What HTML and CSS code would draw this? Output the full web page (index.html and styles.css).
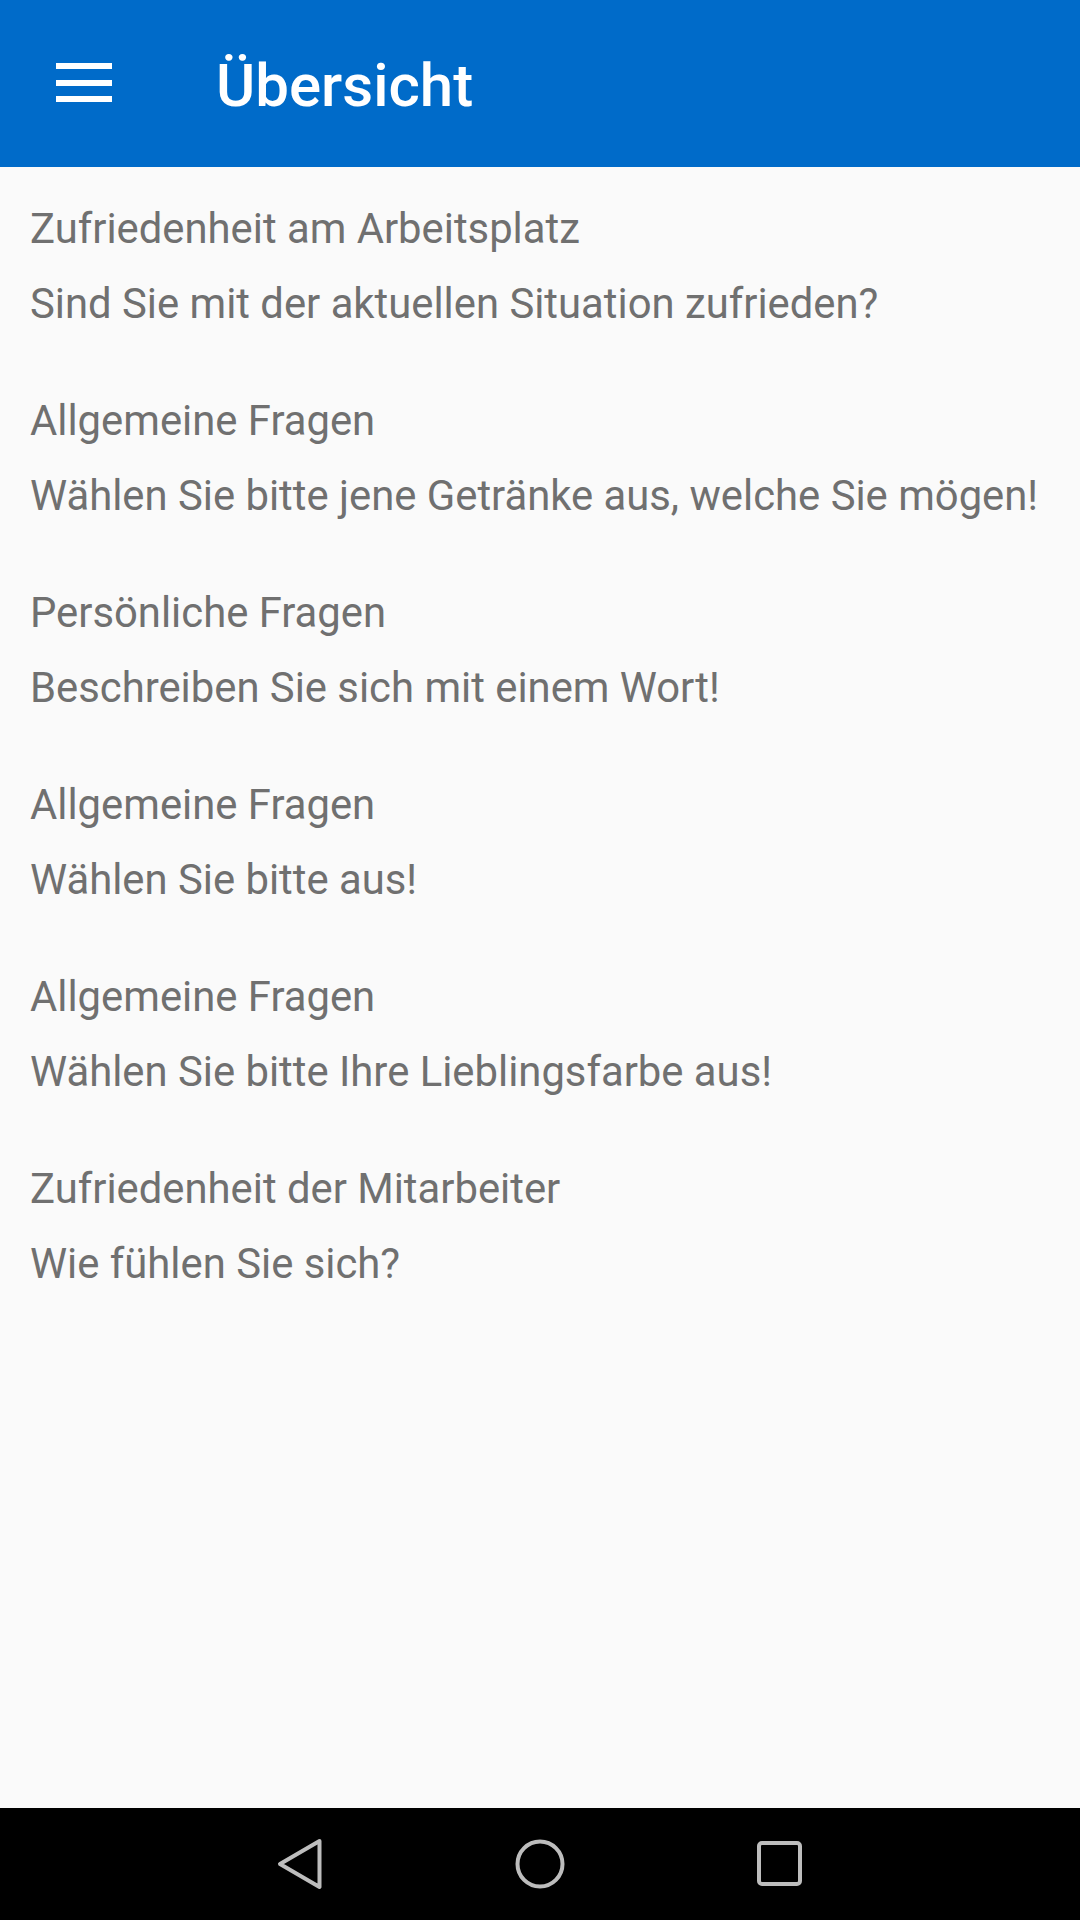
FILE: index.html
```html
<!DOCTYPE html>
<html lang="de">
<head>
<meta charset="utf-8">
<title>Übersicht</title>
<link rel="stylesheet" href="styles.css">
</head>
<body>
<div class="screen">
  <header class="appbar">
    <div class="menu" aria-label="Menü">
      <span></span><span></span><span></span>
    </div>
    <h1 class="title">Übersicht</h1>
  </header>
  <main class="list">
    <div class="item">
      <div class="cat">Zufriedenheit am Arbeitsplatz</div>
      <div class="q">Sind Sie mit der aktuellen Situation zufrieden?</div>
    </div>
    <div class="item">
      <div class="cat">Allgemeine Fragen</div>
      <div class="q">Wählen Sie bitte jene Getränke aus, welche Sie mögen!</div>
    </div>
    <div class="item">
      <div class="cat">Persönliche Fragen</div>
      <div class="q">Beschreiben Sie sich mit einem Wort!</div>
    </div>
    <div class="item">
      <div class="cat">Allgemeine Fragen</div>
      <div class="q">Wählen Sie bitte aus!</div>
    </div>
    <div class="item">
      <div class="cat">Allgemeine Fragen</div>
      <div class="q">Wählen Sie bitte Ihre Lieblingsfarbe aus!</div>
    </div>
    <div class="item">
      <div class="cat">Zufriedenheit der Mitarbeiter</div>
      <div class="q">Wie fühlen Sie sich?</div>
    </div>
  </main>
  <nav class="navbar">
    <div class="navbtn">
      <svg width="50" height="52" viewBox="0 0 50 52"><path d="M44.5 3 L5 26 L44.5 49 Z" fill="none" stroke="#bdbdbd" stroke-width="4" stroke-linejoin="round"/></svg>
    </div>
    <div class="navbtn">
      <svg width="52" height="52" viewBox="0 0 52 52"><circle cx="26" cy="26" r="22.5" fill="none" stroke="#bdbdbd" stroke-width="4"/></svg>
    </div>
    <div class="navbtn">
      <svg width="48" height="48" viewBox="0 0 48 48"><rect x="3" y="3" width="41" height="41" rx="3" fill="none" stroke="#bdbdbd" stroke-width="4"/></svg>
    </div>
  </nav>
</div>
</body>
</html>
```

FILE: styles.css
```css
* { box-sizing: border-box; }
html, body { margin: 0; padding: 0; }
body {
  width: 1080px;
  height: 1920px;
  background: #fafafa;
  font-family: Roboto, "Noto Sans", "Liberation Sans", sans-serif;
  overflow: hidden;
}
.screen {
  display: flex;
  flex-direction: column;
  height: 1920px;
}
.appbar {
  height: 167px;
  flex: none;
  background: #006bc9;
  display: flex;
  align-items: center;
  padding-left: 56px;
}
.menu {
  width: 56px;
  display: flex;
  flex-direction: column;
  gap: 10.5px;
  margin-top: -2px;
}
.menu span {
  display: block;
  height: 6px;
  background: #ffffff;
}
.title {
  margin: 4px 0 0 104px;
  color: #ffffff;
  font-size: 60px;
  font-weight: 500;
  line-height: 1;
}
.list {
  flex: 1;
  display: flex;
  flex-direction: column;
  gap: 57px;
  padding: 32px 0 0 30px;
}
.item {
  display: flex;
  flex-direction: column;
  gap: 15px;
}
.cat, .q {
  font-size: 41.8px;
  line-height: 60px;
  color: #707070;
  white-space: nowrap;
}
.navbar {
  height: 112px;
  flex: none;
  background: #000000;
  display: flex;
  justify-content: center;
}
.navbtn {
  width: 240px;
  display: flex;
  align-items: center;
  justify-content: center;
}
```
